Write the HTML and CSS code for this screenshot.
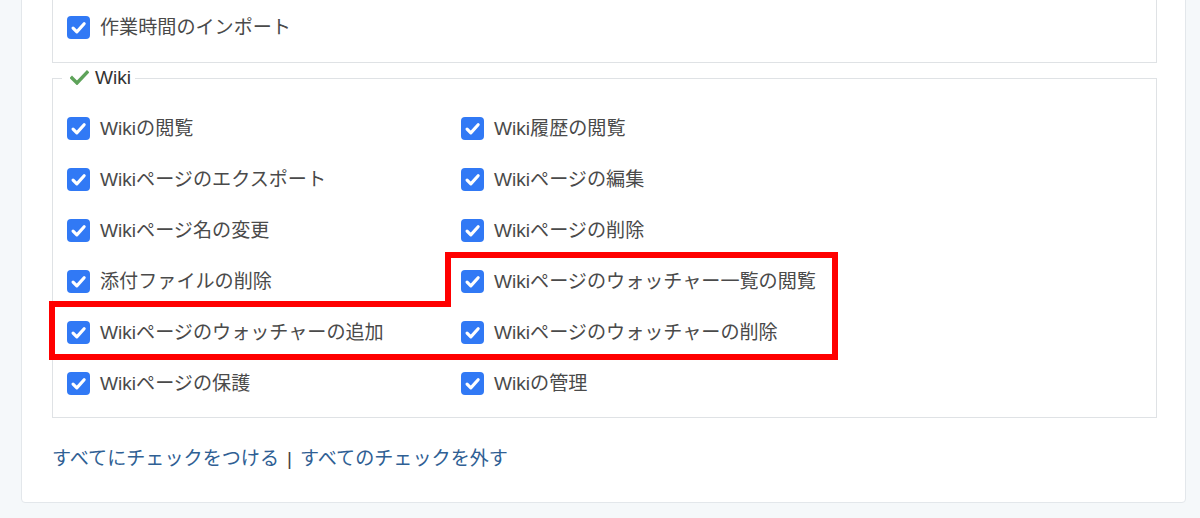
FILE: index.html
```html
<!DOCTYPE html>
<html lang="ja">
<head>
<meta charset="utf-8">
<title>Wiki permissions</title>
<link rel="stylesheet" href="styles.css">
</head>
<body>
<div class="card">
  <fieldset class="group group-top">
    <div class="grid">
      <label class="item"><span class="cb"><svg viewBox="0 0 22 22"><path d="M5.8 11.6 L9.4 15.2 L16.4 7.4"/></svg></span>作業時間のインポート</label>
    </div>
  </fieldset>

  <fieldset class="group group-wiki">
    <legend class="legend"><svg class="legend-check" viewBox="0 0 19 15"><path d="M2 8 L7 13 L17 2.5"/></svg>Wiki</legend>
    <div class="grid">
      <label class="item"><span class="cb"><svg viewBox="0 0 22 22"><path d="M5.8 11.6 L9.4 15.2 L16.4 7.4"/></svg></span>Wikiの閲覧</label>
      <label class="item"><span class="cb"><svg viewBox="0 0 22 22"><path d="M5.8 11.6 L9.4 15.2 L16.4 7.4"/></svg></span>Wiki履歴の閲覧</label>
      <label class="item"><span class="cb"><svg viewBox="0 0 22 22"><path d="M5.8 11.6 L9.4 15.2 L16.4 7.4"/></svg></span>Wikiページのエクスポート</label>
      <label class="item"><span class="cb"><svg viewBox="0 0 22 22"><path d="M5.8 11.6 L9.4 15.2 L16.4 7.4"/></svg></span>Wikiページの編集</label>
      <label class="item"><span class="cb"><svg viewBox="0 0 22 22"><path d="M5.8 11.6 L9.4 15.2 L16.4 7.4"/></svg></span>Wikiページ名の変更</label>
      <label class="item"><span class="cb"><svg viewBox="0 0 22 22"><path d="M5.8 11.6 L9.4 15.2 L16.4 7.4"/></svg></span>Wikiページの削除</label>
      <label class="item"><span class="cb"><svg viewBox="0 0 22 22"><path d="M5.8 11.6 L9.4 15.2 L16.4 7.4"/></svg></span>添付ファイルの削除</label>
      <label class="item"><span class="cb"><svg viewBox="0 0 22 22"><path d="M5.8 11.6 L9.4 15.2 L16.4 7.4"/></svg></span>Wikiページのウォッチャー一覧の閲覧</label>
      <label class="item"><span class="cb"><svg viewBox="0 0 22 22"><path d="M5.8 11.6 L9.4 15.2 L16.4 7.4"/></svg></span>Wikiページのウォッチャーの追加</label>
      <label class="item"><span class="cb"><svg viewBox="0 0 22 22"><path d="M5.8 11.6 L9.4 15.2 L16.4 7.4"/></svg></span>Wikiページのウォッチャーの削除</label>
      <label class="item"><span class="cb"><svg viewBox="0 0 22 22"><path d="M5.8 11.6 L9.4 15.2 L16.4 7.4"/></svg></span>Wikiページの保護</label>
      <label class="item"><span class="cb"><svg viewBox="0 0 22 22"><path d="M5.8 11.6 L9.4 15.2 L16.4 7.4"/></svg></span>Wikiの管理</label>
    </div>
  </fieldset>

  <p class="links"><a href="#">すべてにチェックをつける</a><span class="sep">|</span><a href="#">すべてのチェックを外す</a></p>
</div>

<svg class="highlight" viewBox="0 0 1200 518" width="1200" height="518">
  <path d="M52 304 H448 V255 H835 V357 H52 Z"/>
</svg>
</body>
</html>
```

FILE: styles.css
```css
* { box-sizing: border-box; }

html, body {
  margin: 0;
  padding: 0;
}

body {
  background: #f5f8fa;
  font-family: "Liberation Sans", "Noto Sans CJK JP", sans-serif;
  font-size: 19.1px;
  color: #4a4a4a;
  height: 518px;
  overflow: hidden;
  position: relative;
}

.card {
  margin: -20px 14px 0 21px;
  background: #fff;
  border: 1px solid #e3e7eb;
  border-radius: 4px;
  padding: 0 28px 0 30px;
}

.group {
  margin: 0;
  padding: 0;
  border: 1px solid #dfe2e5;
  min-width: 0;
}

.group-top .grid {
  padding: 20px 14px 9px;
}

.group-wiki {
  margin-top: 3px;
}

.group-wiki .grid {
  padding: 13px 14px 8px;
}

.legend {
  margin-left: 9px;
  padding: 0 4px 0 8px;
  line-height: 24px;
  color: #333;
  display: flex;
  align-items: center;
}

.legend-check {
  width: 19px;
  height: 15px;
  margin-right: 6px;
  margin-top: -2px;
}

.legend-check path {
  fill: none;
  stroke: #5ea35a;
  stroke-width: 3.4;
  stroke-linecap: square;
  stroke-linejoin: miter;
}

.grid {
  display: grid;
  grid-template-columns: 394px 1fr;
}

.group-top .grid {
  grid-template-columns: 1fr;
}

.item {
  height: 51px;
  display: flex;
  align-items: center;
  gap: 10px;
  line-height: 24px;
  white-space: nowrap;
}

.cb {
  width: 23px;
  height: 23px;
  flex: none;
  border-radius: 4px;
  background: #3179f5;
  display: flex;
  align-items: center;
  justify-content: center;
}

.cb svg {
  width: 23px;
  height: 23px;
}

.cb path {
  fill: none;
  stroke: #fff;
  stroke-width: 3;
  stroke-linecap: round;
  stroke-linejoin: round;
}

.links {
  margin: 29px 0 0;
  padding-bottom: 31px;
  line-height: 24px;
}

.links a {
  color: #2f6094;
  text-decoration: none;
}

.links .sep {
  color: #444;
  margin: 0 8px 0 8px;
}

.highlight {
  position: absolute;
  left: 0;
  top: 0;
  pointer-events: none;
}

.highlight path {
  fill: none;
  stroke: #ff0000;
  stroke-width: 6;
  stroke-linejoin: miter;
}
```
